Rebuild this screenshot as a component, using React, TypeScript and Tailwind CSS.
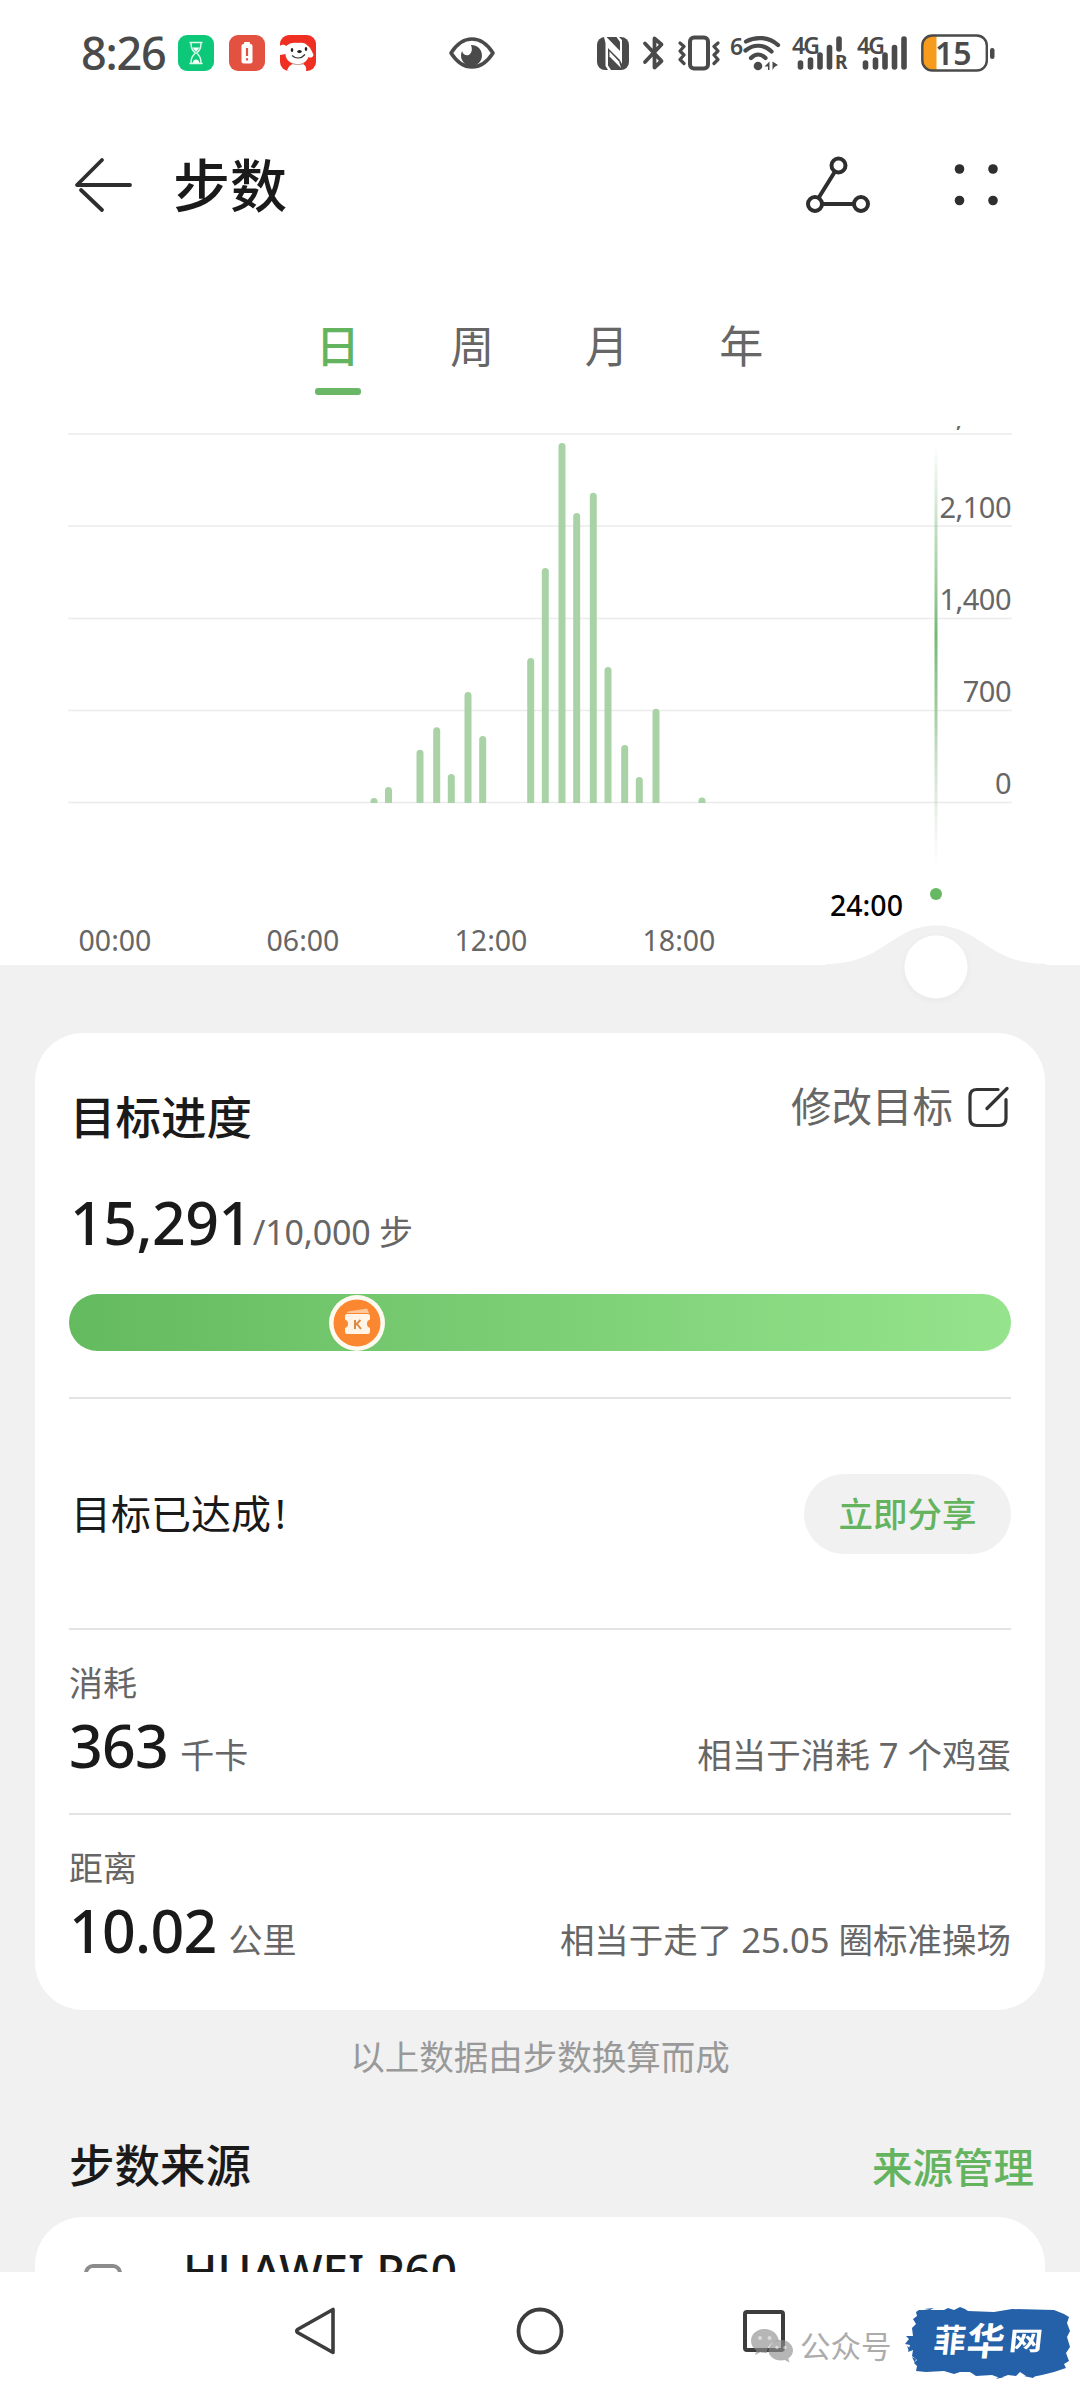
import React from "react";

const TABS = ["日", "周", "月", "年"];
const HOURS = ["00:00", "06:00", "12:00", "18:00"];
const STEP_LABELS = ["2,800", "2,100", "1,400", "700", "0"];
const GRID_LINES = [434, 526, 618.5, 710.5, 802.5];

// [centre x, top y] of every half-hour bar; all of them stand on y = 803
const BARS: [number, number][] = [
  [374, 798],
  [388.5, 787],
  [420, 749.7],
  [436.7, 727.3],
  [451.3, 774],
  [468, 692],
  [482.7, 736],
  [530.7, 658],
  [545.3, 568],
  [562, 443],
  [576.7, 513],
  [593.3, 492.7],
  [608, 667],
  [624.7, 745],
  [639.3, 777],
  [656, 708.7],
  [702, 797.5],
];

function barPath(x: number, top: number) {
  const r = 3.5;
  const shoulder = Math.min(top + r, 803);
  return `M${x - r} 803V${shoulder}A${r} ${r} 0 0 1 ${x + r} ${shoulder}V803Z`;
}

function Hourglass() {
  return (
    <svg width="36" height="36" viewBox="0 0 36 36">
      <rect width="36" height="36" rx="9" fill="#0cc878" />
      <g fill="none" stroke="#d9fbe9" strokeWidth="1.5" strokeLinejoin="round" strokeLinecap="round">
        <path d="M12 7.5h12M12 28.5h12M13 7.5c0 6 1 7 4.3 10.500C14 21.500 13 23 13 28.500M23 7.500c0 6-1 7-4.300 10.500C22 21.500 23 23 23 28.500" />
      </g>
      <path d="M14.500 12.500h7L18 17zM14.500 28c.5-2.500 2-3.500 3.500-3.500s3 1 3.500 3.500z" fill="#fff" />
    </svg>
  );
}

function LowBattery() {
  return (
    <svg width="36" height="36" viewBox="0 0 36 36">
      <rect width="36" height="36" rx="9" fill="#e35141" />
      <rect x="15" y="7" width="6" height="3" rx="1" fill="#fff" />
      <rect x="12.500" y="9" width="11" height="19.500" rx="2" fill="#fff" />
      <path d="M18 13v8M18 23.300v2.200" stroke="#e35141" strokeWidth="2.200" />
    </svg>
  );
}

function DogApp() {
  return (
    <svg width="36" height="36" viewBox="0 0 36 36">
      <defs>
        <clipPath id="dog">
          <rect width="36" height="36" rx="9" />
        </clipPath>
      </defs>
      <g clipPath="url(#dog)">
        <rect width="36" height="36" fill="#ee2f22" />
        <path d="M7 36c1-5 5-8 11-8s9 3 8 8z" fill="#fff" />
        <path d="M0 11c2-2 5-1 6 0 3-3 8-4 12-3 4-1 8 0 10 3 2 1 4 5 5.500 9-1 3-3 3-5 2-2 5-6 7-11 7-7 0-12-4-12-10-2 0-3 1-5.500 1z" fill="#fff" />
        <path d="M12 20.500c4 3.500 9 3.500 13-1" fill="none" stroke="#333" strokeWidth="1.200" />
        <ellipse cx="12" cy="15" rx="1.300" ry="1.900" fill="#222" />
        <ellipse cx="26" cy="14" rx="1.300" ry="1.900" fill="#222" />
        <ellipse cx="19.500" cy="16.500" rx="2.200" ry="1.500" fill="#222" />
        <path d="M12 28.500c4 1.500 8 1.500 12 0" stroke="#c9a49c" strokeWidth="1" fill="none" />
      </g>
    </svg>
  );
}

function Eye() {
  return (
    <svg width="48" height="34" viewBox="0 0 48 34">
      <path d="M3 17C10 6 17 3 24 3s14 3 21 14C38 28 31 31 24 31S10 28 3 17z" fill="#fff" stroke="#4a4a4a" strokeWidth="3.600" strokeLinejoin="round" />
      <path d="M23 9a10.500 10.500 0 1 1-9 6c1.500 5 6 5 8 3s2.500-5 1-9z" fill="#4a4a4a" />
    </svg>
  );
}

function Nfc() {
  return (
    <svg width="32" height="33" viewBox="0 0 32 33">
      <rect width="32" height="33" rx="8" fill="#4a4a4a" />
      <path d="M7 0L9.500 0 23 14V5L19.500 0H22L25 3V27L22.500 22.500 11 11V28.500L14 33H11L8.500 29V6Z" fill="#fff" />
      <path d="M12.500 14.500L22 24.500 24 31 12.500 19.500Z" fill="#fff" />
    </svg>
  );
}

function Bluetooth() {
  return (
    <svg width="24" height="36" viewBox="0 0 24 36">
      <path d="M3 8.500L19.500 26 12.500 32.500V3.500L19.500 9.500 3 27" fill="none" stroke="#4a4a4a" strokeWidth="3.800" strokeLinejoin="round" strokeLinecap="round" />
    </svg>
  );
}

function Vibrate() {
  return (
    <svg width="42" height="36" viewBox="0 0 42 36">
      <rect x="12" y="2.500" width="18" height="31" rx="4" fill="none" stroke="#4a4a4a" strokeWidth="4" />
      <path d="M2 8l4 3.500-4 4.500 4 4-4 4.500 4 4M40 8l-4 3.500 4 4.500-4 4 4 4.500-4 4" fill="none" stroke="#4a4a4a" strokeWidth="3.200" strokeLinejoin="round" strokeLinecap="round" />
    </svg>
  );
}

function Wifi() {
  return (
    <div className="relative h-[36px] w-[49px]">
      <svg width="49" height="36" viewBox="0 0 49 36">
        <g fill="none" stroke="#4a4a4a" strokeWidth="4.200" strokeLinecap="round">
          <path d="M14 6.500c10-5.500 23-4.500 32 3.500M13.500 15.500c8-6.500 18-6.500 26 1M19 23c4.500-4.500 10-4.500 14.500 0" />
        </g>
        <circle cx="26" cy="31" r="4.300" fill="#4a4a4a" />
        <path d="M37.500 26.500v8.500h-1.500v-3.500h-3.500zM40.500 35v-8.500l5.500 3.500-3.500 2z" fill="#4a4a4a" />
      </svg>
      <span className="absolute -left-[2px] top-0 text-[23px] leading-[22px] font-semibold">6</span>
    </div>
  );
}

function Signal({ roaming = false }: { roaming?: boolean }) {
  return (
    <div className="relative h-[36px] w-[52px]">
      <svg width="52" height="36" viewBox="0 0 52 36">
        <g stroke="#4a4a4a" strokeWidth="5.600" strokeLinecap="round">
          <path d="M8.500 28V32M18.500 25V32M28 20V32M37.500 12.500V32" />
          <path d={roaming ? "M47 4V14" : "M47 4V32"} />
        </g>
      </svg>
      <span className="absolute left-0 -top-[3px] text-[23px] leading-[26px] font-semibold tracking-[-1.800px]">4G</span>
      {roaming && <span className="absolute left-[43px] top-[17px] text-[19px] leading-[20px] font-bold">R</span>}
    </div>
  );
}

function Battery() {
  return (
    <div className="relative h-[38px] w-[74px]">
      <svg width="74" height="38" viewBox="0 0 74 38">
        <defs>
          <clipPath id="cell">
            <rect x="1.500" y="1.500" width="64" height="35" rx="10" />
          </clipPath>
        </defs>
        <rect x="0" y="0" width="15.500" height="38" fill="#f79b1e" clipPath="url(#cell)" />
        <rect x="1.300" y="1.500" width="64.500" height="35" rx="10" fill="none" stroke="#4a4a4a" strokeWidth="2.400" />
        <rect x="69" y="14" width="4.500" height="11" rx="2.200" fill="#4a4a4a" />
      </svg>
      <span className="absolute left-[14px] top-[1px] text-[32px] leading-[36px] font-semibold">15</span>
    </div>
  );
}

function StatusBar() {
  return (
    <div className="flex h-[106px] items-center pl-[81px] pr-[85px] text-[#4a4a4a]">
      <span className="w-[97px] text-[45px] leading-[60px] font-medium tracking-[-1.200px]">8:26</span>
      <div className="flex gap-[15px]">
        <Hourglass />
        <LowBattery />
        <DogApp />
      </div>
      <div className="ml-[132px]">
        <Eye />
      </div>
      <div className="ml-auto flex items-center">
        <Nfc />
        <div className="ml-[13px]"><Bluetooth /></div>
        <div className="ml-[12px]"><Vibrate /></div>
        <div className="ml-[12px]"><Wifi /></div>
        <div className="ml-[11px]"><Signal roaming /></div>
        <div className="ml-[13px]"><Signal /></div>
        <div className="ml-[12px]"><Battery /></div>
      </div>
    </div>
  );
}

function Header() {
  return (
    <header className="flex h-[158px] items-center pl-[74px] pr-[81px]">
      <svg width="58" height="56" viewBox="0 0 58 56" fill="none" stroke="#2e2e2e" strokeWidth="3.800" strokeLinecap="round" strokeLinejoin="round">
        <path d="M28 3L3 28H56M7 33L28 53" />
      </svg>
      <h1 className="ml-[41px] text-[57px] leading-[70px] font-medium text-[#1a1a1a]">步数</h1>
      <svg className="ml-auto" width="64" height="58" viewBox="0 0 64 58" fill="none" stroke="#2e2e2e" strokeWidth="4">
        <circle cx="32.500" cy="9.500" r="7" />
        <circle cx="9" cy="48" r="7" />
        <circle cx="55" cy="48" r="7" />
        <path d="M29 15.500L12.500 42M16 48H48" />
      </svg>
      <svg className="ml-[84px]" width="45" height="44" viewBox="0 0 45 44" fill="#2e2e2e">
        <circle cx="5.500" cy="6" r="4.800" />
        <circle cx="39" cy="6" r="4.800" />
        <circle cx="5.500" cy="37.500" r="4.800" />
        <circle cx="39" cy="37.500" r="4.800" />
      </svg>
    </header>
  );
}

function Tabs() {
  return (
    <nav className="flex h-[162px] justify-center pr-px pt-[52px]">
      {TABS.map((tab, i) => (
        <div key={tab} className="flex w-[134.500px] flex-col items-center">
          <span className={i === 0 ? "text-[44px] leading-[60px] font-medium text-[#64b45f]" : "text-[44px] leading-[60px] text-[#666]"}>{tab}</span>
          {i === 0 && <span className="mt-[12px] h-[7px] w-[46px] rounded-[3px] bg-[#6bb768]" />}
        </div>
      ))}
    </nav>
  );
}

function StepChart() {
  return (
    <section className="relative z-10 flex h-[539px] flex-col justify-end">
      <svg className="absolute left-0 top-0" width="1080" height="594" viewBox="0 426 1080 594">
        <defs>
          <linearGradient id="cursor" x1="0" y1="0" x2="0" y2="1">
            <stop offset="0" stopColor="#8cc48a" stopOpacity="0" />
            <stop offset="0.200" stopColor="#8cc48a" stopOpacity="0.550" />
            <stop offset="0.450" stopColor="#74b872" stopOpacity="1" />
            <stop offset="0.620" stopColor="#8cc48a" stopOpacity="0.850" />
            <stop offset="1" stopColor="#c5cdc4" stopOpacity="0" />
          </linearGradient>
          <filter id="knob" x="-30%" y="-30%" width="160%" height="160%">
            <feDropShadow dx="0" dy="2" stdDeviation="3" floodColor="#000" floodOpacity="0.040" />
          </filter>
        </defs>
        <g stroke="#ebebeb" strokeWidth="1.500">
          {GRID_LINES.map((y) => (
            <line key={y} x1="68" x2="1012" y1={y} y2={y} />
          ))}
        </g>
        <g fill="#a9d3a6">
          {BARS.map(([x, top]) => (
            <path key={x} d={barPath(x, top)} />
          ))}
        </g>
        <rect x="934.500" y="446" width="3" height="420" fill="url(#cursor)" />
        <circle cx="936" cy="894" r="6" fill="#67b863" />
        <path d="M826 964C884 964 892 925.500 936 925.500S988 964 1046 964V966H826Z" fill="#f1f1f1" />
        <circle cx="936" cy="967" r="31.500" fill="#fff" filter="url(#knob)" />
      </svg>
      <div className="absolute left-0 top-0 h-[380px] w-full overflow-hidden">
        <div className="-mt-[31px] flex flex-col pr-[69px] text-right text-[29px] leading-[40px] tracking-[-0.500px] text-[#666]">
          {STEP_LABELS.map((label) => (
            <span key={label} className="mb-[52px] h-[40px] last:mb-0">{label}</span>
          ))}
        </div>
      </div>
      <div className="relative flex pb-[5px]">
        <div className="flex pl-[21px]">
          {HOURS.map((h) => (
            <span key={h} className="w-[188px] text-center text-[28.500px] leading-[40px] text-[#666]">{h}</span>
          ))}
        </div>
        <span className="ml-[57px] -mt-[35px] text-[28.500px] leading-[40px] font-medium text-black">24:00</span>
      </div>
    </section>
  );
}

function Divider() {
  return <div className="h-[2px] bg-[#e3e3e3]" />;
}

function Stat({ label, value, unit, note }: { label: string; value: string; unit: string; note: string }) {
  return (
    <div className="pt-[28px] pb-[39px] text-[#666]">
      <p className="h-[50px] text-[34px] leading-[50px]">{label}</p>
      <div className="mt-[7px] flex h-[59px] items-baseline justify-between">
        <p className="text-[59px] leading-[60px] font-medium tracking-[-0.700px] text-[#1a1a1a]">
          {value}
          <span className="ml-[12px] text-[34px] leading-none font-normal tracking-normal text-[#666]">{unit}</span>
        </p>
        <p className="text-[34.500px] leading-none">{note}</p>
      </div>
    </div>
  );
}

function GoalCard() {
  return (
    <section className="mx-[35px] mt-[68px] rounded-[48px] bg-white px-[34px] pt-[44px] pb-[12px]">
      <div className="flex h-[71px] items-start justify-between pr-[2px]">
        <h2 className="mt-[10px] pl-px text-[45.500px] leading-[60px] font-medium text-[#1a1a1a]">目标进度</h2>
        <div className="flex items-center">
          <span className="text-[40.500px] leading-[60px] text-[#666]">修改目标</span>
          <svg className="ml-[15px]" width="41" height="42" viewBox="0 0 41 42" fill="none" stroke="#333" strokeWidth="3.200" strokeLinecap="round">
            <path d="M30 3.500H9Q2 3.500 2 10.500V32.500Q2 39.500 9 39.500H31Q38 39.500 38 32.500V13.500M19 22.500L39 2.500" />
          </svg>
        </div>
      </div>
      <p className="mt-[38px] h-[71px] pl-px text-[59px] leading-[72px] font-medium tracking-[-0.500px] text-[#1a1a1a]">
        15,291<span className="ml-px text-[34px] leading-none font-normal tracking-[-0.200px] text-[#666]">/10,000 步</span>
      </p>
      <div className="relative mt-[37px] h-[57px] rounded-full bg-linear-to-r from-[#64ba5f] to-[#95e48d]">
        <svg className="absolute left-[259px] top-0" width="58" height="58" viewBox="0 0 58 58">
          <circle cx="29" cy="29" r="28" fill="#fffaf0" />
          <circle cx="29" cy="29" r="23.500" fill="#fb8830" />
          <path d="M20 17.500L39 14.500 41 19H19z" fill="#fdc79b" />
          <path d="M19 20H40Q42 20 42 22V25.500A4.500 4.500 0 0 0 42 34V37.500Q42 40 40 40H19Q17 40 17 37.500V34A4.500 4.500 0 0 0 17 25.500V22Q17 20 19 20Z" fill="#fff4e6" />
          <path d="M27 26V35M32.500 26L27.500 31M29 30L33 35" stroke="#d98a45" strokeWidth="2" fill="none" />
        </svg>
      </div>
      <div className="mt-[46px]"><Divider /></div>
      <div className="flex h-[229px] items-center justify-between">
        <span className="pl-[2px] text-[40px] leading-[60px] text-[#1a1a1a]">目标已达成<span className="ml-[4px]">!</span></span>
        <button className="h-[80px] w-[207px] rounded-full bg-[#f1f1f1] text-[34.500px] leading-[60px] font-medium text-[#64b45f]">立即分享</button>
      </div>
      <Divider />
      <Stat label="消耗" value="363" unit="千卡" note="相当于消耗 7 个鸡蛋" />
      <Divider />
      <Stat label="距离" value="10.02" unit="公里" note="相当于走了 25.05 圈标准操场" />
    </section>
  );
}

function Sources() {
  return (
    <>
      <p className="mt-[22px] h-[50px] text-center text-[34.500px] leading-[50px] text-[#999]">以上数据由步数换算而成</p>
      <div className="mt-[53px] flex h-[60px] justify-between pl-[69px] pr-[46px]">
        <h2 className="text-[45.500px] leading-[60px] font-medium text-[#1a1a1a]">步数来源</h2>
        <span className="mt-[3px] text-[40.500px] leading-[60px] font-medium text-[#64b45f]">来源管理</span>
      </div>
      <section className="mx-[35px] mt-[22px] flex rounded-t-[48px] bg-white pl-[49px] pt-[23px]">
        <svg className="mt-[24px]" width="39" height="60" viewBox="0 0 39 60">
          <rect x="2" y="2" width="34" height="56" rx="7" fill="none" stroke="#8c8c8c" strokeWidth="4" />
        </svg>
        <span className="ml-[60px] text-[46px] leading-[60px] font-medium text-[#1a1a1a]">HUAWEI P60</span>
      </section>
    </>
  );
}

function Watermark() {
  return (
    <div className="absolute left-[750px] top-[34px] flex items-center">
      <svg className="mt-[6px]" width="44" height="36" viewBox="0 0 44 36">
        <g fill="#8f8f8f" fillOpacity="0.650">
          <path d="M15 1C7 1 1 6 1 13c0 4 2 7 5.500 9.500L5 27l5.500-2.800c1.500.5 3 .7 4.500.7h2c0-7 5-12 12-12C28 6 22 1 15 1z" />
          <path d="M31 12c-7 0-12.500 5-12.500 10.500S24 32.500 31 32.500c1.300 0 2.600-.2 3.800-.5l4.700 2.500-1.200-4c3-2 4.700-5 4.700-8C43 17 38 12 31 12z" />
        </g>
        <g fill="#fff" fillOpacity="0.500">
          <circle cx="10" cy="10" r="2" />
          <circle cx="19.500" cy="10" r="2" />
          <circle cx="27" cy="19.500" r="1.700" />
          <circle cx="35" cy="19.500" r="1.700" />
        </g>
      </svg>
      <span className="ml-[6px] mt-[5px] text-[30.500px] leading-[40px] text-[#acacac]">公众号</span>
      <div className="relative ml-[12px] h-[74px] w-[168px]">
        <svg width="168" height="74" viewBox="0 0 168 74" fill="#2561a8">
          <path d="M12 6L15 4 40 4 44 2 50 4 56 1 61 3 64 5 90 6 108 3 150 4 160 8 165 11 163 17 166 25 163 31 166 41 162 47 165 55 160 58 162 62 150 66 138 69 128 71 122 70 116 66 112 70 104 69 96 72 88 69 72 70 66 66 56 66 50 68 40 65 22 66 12 65 13 60 10 57 13 54 8 50 9 44 4 46 6 39 1 38 5 33 2 30 9 30 8 22 12 18 9 13 13 10Z" />
          <path d="M8 51l4 2-1 4zM3 40l3 2-1 3zM120 70l12-1-3 3zM20 3l10-1-4 2zM100 71l-8 2 4-3z" />
        </svg>
        <div className="absolute left-[30px] top-[11px] flex -skew-x-6 items-center font-bold text-white">
          <span className="text-[32px] leading-[46px]">菲</span>
          <span className="ml-px text-[38px] leading-[46px]">华</span>
          <span className="ml-[4px] scale-y-75 text-[34px] leading-[46px]">网</span>
        </div>
      </div>
    </div>
  );
}

function NavBar() {
  return (
    <footer className="relative flex h-[118px] items-center bg-white pl-[294px]">
      <svg width="44" height="52" viewBox="0 0 44 52" fill="none" stroke="#3d3d3d" strokeWidth="3.600" strokeLinejoin="round">
        <path d="M39 4.500V47.500L3.500 27.500Q2 26 3.500 24.500Z" />
      </svg>
      <svg className="ml-[177px]" width="50" height="50" viewBox="0 0 50 50" fill="none" stroke="#3d3d3d" strokeWidth="3.800">
        <circle cx="25" cy="25" r="21.500" />
      </svg>
      <svg className="ml-[177px]" width="44" height="44" viewBox="0 0 44 44" fill="none" stroke="#3d3d3d" strokeWidth="4">
        <rect x="3" y="3" width="38" height="38" rx="2" />
      </svg>
      <Watermark />
    </footer>
  );
}

export default function App() {
  return (
    <div className="h-[2390px] w-[1080px] overflow-hidden whitespace-nowrap bg-white font-['Noto_Sans','Noto_Sans_CJK_SC',sans-serif]">
      <StatusBar />
      <Header />
      <Tabs />
      <StepChart />
      <main className="flow-root h-[1307px] overflow-hidden bg-[#f1f1f1]">
        <GoalCard />
        <Sources />
      </main>
      <NavBar />
    </div>
  );
}
